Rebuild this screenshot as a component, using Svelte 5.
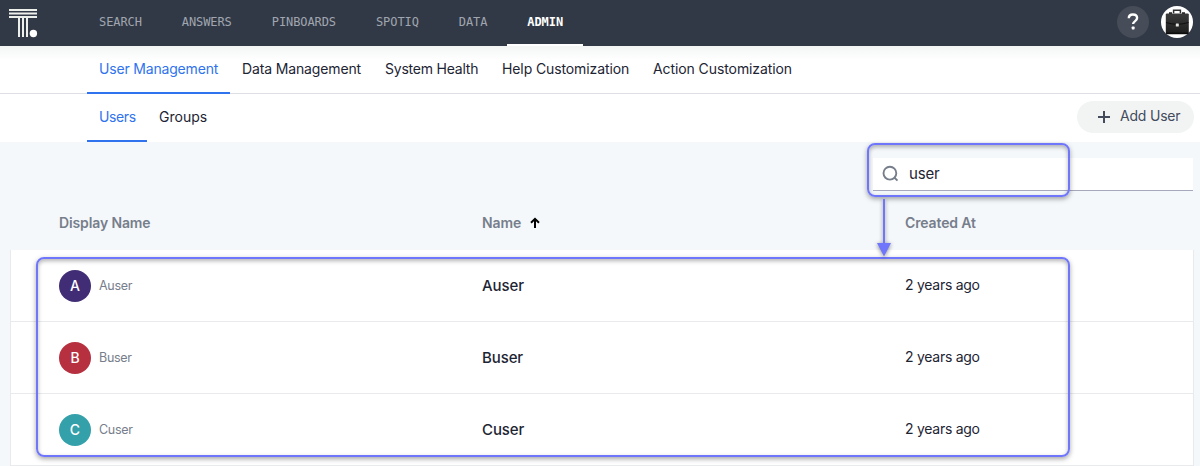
<script>
  const nav = ['SEARCH', 'ANSWERS', 'PINBOARDS', 'SPOTIQ', 'DATA', 'ADMIN'];
  const sections = [
    { label: 'User Management', width: 143, spacing: -0.18 },
    { label: 'Data Management', width: 143, spacing: -0.14 },
    { label: 'System Health', width: 117, spacing: -0.22 },
    { label: 'Help Customization', width: 151, spacing: -0.11 },
    { label: 'Action Customization', width: 163, spacing: -0.09 }
  ];
  const users = [
    { name: 'Auser', color: '#412d75' },
    { name: 'Buser', color: '#b6303f' },
    { name: 'Cuser', color: '#34a0aa' }
  ];
</script>

<div class="page">
  <header>
    <svg class="logo" width="30" height="30" viewBox="0 0 30 30">
      <path d="M1 2H29M1 5.5H29M1 9H29" stroke="#edf0ea" stroke-width="2" />
      <path d="M11 9V29M15 9V29M19 9V29" stroke="#edf0ea" stroke-width="2" />
      <circle cx="25.4" cy="25.5" r="3.7" fill="#fff" />
    </svg>
    <nav>
      {#each nav as item}
        <span class:active={item === 'ADMIN'}>{item}</span>
      {/each}
    </nav>
    <div class="actions">
      <span class="help">
        <svg width="12" height="18" viewBox="0 0 12 18">
          <path d="M1.8 5.3C1.8 2.8 3.5 1.5 5.9 1.5s4.2 1.3 4.2 3.6c0 3-4 3-4 6" fill="none" stroke="#fff" stroke-width="2.4" />
          <rect x="4.7" y="13.6" width="2.9" height="2.9" rx=".7" fill="#fff" />
        </svg>
      </span>
      <svg class="avatar" width="32" height="32" viewBox="0 0 32 32">
        <defs>
          <linearGradient id="leather" x1="0" y1="0" x2="0" y2="1">
            <stop offset="0" stop-color="#3b3b3b" />
            <stop offset="1" stop-color="#1c1c1c" />
          </linearGradient>
        </defs>
        <circle cx="16" cy="16" r="16" fill="#fff" />
        <path d="M12.6 7.2V4.2h6.8v3" fill="none" stroke="#303030" stroke-width="1.5" />
        <path d="M8 6.2h3v2H8zM21 6.2h3v2h-3z" fill="#222" />
        <rect x="4.8" y="7.4" width="23" height="20.8" rx="1.2" fill="url(#leather)" />
        <path d="M5 16.5Q16 20 27.5 16.5" fill="none" stroke="#0b0b0b" stroke-width=".9" />
        <path d="M5.3 27.2h22" stroke="#050505" stroke-width="1" />
        <rect x="14.8" y="17.4" width="3" height="3" rx=".5" fill="#e7e5df" />
      </svg>
    </div>
  </header>

  <div class="sections">
    {#each sections as section, i}
      <span class="tab" class:selected={i === 0} style:width="{section.width}px" style:letter-spacing="{section.spacing}px">{section.label}</span>
    {/each}
  </div>

  <div class="subtabs">
    <span class="tab selected users">Users</span>
    <span class="tab groups">Groups</span>
    <button>
      <svg width="14" height="14" viewBox="0 0 14 14"><path d="M7 1v12M1 7h12" stroke="#434b5d" stroke-width="2" /></svg>
      <span>Add User</span>
    </button>
  </div>

  <main>
    <div class="searchrow">
      <div class="search">
        <svg width="18" height="18" viewBox="0 0 18 18" fill="none" stroke="#777e8b" stroke-width="1.9">
          <circle cx="7.9" cy="8.2" r="6.4" />
          <path d="M12.3 12.5l3.2 3.2" />
        </svg>
        <span>user</span>
      </div>
    </div>
    <div class="head row">
      <span>Display Name</span>
      <span class="sorted">Name
        <svg width="10" height="12" viewBox="0 0 10 12" fill="none" stroke="#000" stroke-width="2"><path d="M5 11V2M1 5.8L5 1.9l4 3.9" /></svg>
      </span>
      <span class="createdhead">Created At</span>
    </div>
    <div class="list">
      {#each users as user}
        <div class="row user">
          <div class="display">
            <span class="initial" style:background={user.color}>{user.name[0]}</span>
            <span>{user.name}</span>
          </div>
          <span class="name">{user.name}</span>
          <span class="created">2 years ago</span>
        </div>
      {/each}
    </div>
  </main>

  <div class="callout around-search"></div>
  <div class="callout around-users"></div>
  <svg class="arrow" width="24" height="64" viewBox="0 0 24 64">
    <path d="M12 2V47" stroke="#7076fb" stroke-width="2" />
    <path d="M5 46H19L12 59.5Z" fill="#7076fb" />
  </svg>
</div>

<style>
  :global(body) { overflow: hidden; }
  .page {
    position: relative;
    height: 466px;
    overflow: hidden;
    display: flex;
    flex-direction: column;
    background: #f4f8fb;
    color: #1d2433;
    font-family: Inter, sans-serif;
    font-size: 14px;
  }
  .page :global(svg) { display: block; flex: none; }
  header {
    flex: none;
    height: 46px;
    box-sizing: border-box;
    display: flex;
    align-items: flex-start;
    background: #323946;
  }
  .logo { margin: 8px 0 0 8px; }
  nav { display: flex; margin-left: 41px; }
  nav span {
    height: 44px;
    padding: 0 20px;
    border-bottom: 2px solid transparent;
    font: 12px/44px "DejaVu Sans Mono", monospace;
    letter-spacing: -.09px;
    color: #a0a6b0;
  }
  nav span.active { color: #fff; border-color: #fff; font-weight: bold; }
  .actions { display: flex; gap: 12px; margin: 6px 7px 0 auto; }
  .help {
    width: 32px;
    height: 32px;
    border-radius: 50%;
    display: flex;
    align-items: center;
    justify-content: center;
    background: #464c58;
  }
  .sections {
    flex: none;
    height: 48px;
    box-sizing: border-box;
    display: flex;
    padding-left: 87px;
    border-bottom: 1px solid #dddfe4;
    background: linear-gradient(#f3f5f5, #fff 14px);
  }
  .tab {
    box-sizing: border-box;
    height: 48px;
    padding: 0 12px;
    line-height: 46px;
    white-space: nowrap;
    border-bottom: 2px solid transparent;
  }
  .tab.selected { color: #2f73ee; border-color: #2f73ee; }
  .subtabs {
    flex: none;
    height: 48px;
    display: flex;
    padding: 0 6px 0 87px;
    background: #fff;
  }
  .users { width: 60px; letter-spacing: -.4px; }
  .groups { width: 72px; }
  button {
    width: 117px;
    height: 32px;
    margin: 7px 0 0 auto;
    padding: 0 0 0 20px;
    border: 0;
    border-radius: 16px;
    display: flex;
    align-items: center;
    gap: 9px;
    background: #f2f4f4;
    color: #434b5d;
    font: 14px/30px Inter, sans-serif;
    letter-spacing: -.2px;
  }
  button span { padding-bottom: 2px; }
  .searchrow { display: flex; justify-content: flex-end; padding: 16px 7px 0 0; }
  .search {
    box-sizing: border-box;
    width: 320px;
    height: 33px;
    display: flex;
    align-items: center;
    gap: 9px;
    padding-left: 9px;
    background: #fff;
    border-bottom: 1px solid #a6a9bb;
    font-size: 15px;
    letter-spacing: -.15px;
  }
  .search span { padding-bottom: 1px; }
  .row { display: grid; grid-template-columns: 423px 423px 1fr; align-items: center; }
  .head {
    height: 59px;
    padding: 0 0 0 59px;
    line-height: 64px;
    font-weight: 600;
    letter-spacing: -.13px;
    color: #777e8b;
  }
  .sorted { display: flex; align-items: center; gap: 9px; }
  .list {
    box-sizing: border-box;
    margin: 0 6px 0 10px;
    border: 1px solid #e8eaed;
    border-top: 0;
    background: #fff;
  }
  .user { height: 71px; padding-left: 48px; border-bottom: 1px solid #e8eaed; }
  .user:last-child { border-bottom: 0; }
  .display { display: flex; align-items: center; gap: 8px; font-size: 12.5px; letter-spacing: -.3px; color: #777e8b; }
  .initial {
    width: 32px;
    height: 32px;
    border-radius: 50%;
    text-align: center;
    line-height: 31px;
    font-size: 14px;
    font-weight: 500;
    letter-spacing: 0;
    color: #fff;
  }
  .name { font-size: 15px; font-weight: 500; letter-spacing: -.1px; }
  .created { padding-bottom: 2px; letter-spacing: -.27px; }
  .callout {
    position: absolute;
    box-sizing: border-box;
    border: 2px solid #7076fb;
    border-radius: 8px;
    box-shadow: 0 2px 5px rgba(0, 0, 0, .35), inset 0 2px 4px rgba(0, 0, 0, .3);
  }
  .around-search { left: 867px; top: 143px; width: 203px; height: 54px; }
  .around-users { left: 36px; top: 257px; width: 1034px; height: 200px; }
  .arrow { position: absolute; left: 872px; top: 197px; filter: drop-shadow(0 1px 2px rgba(0, 0, 0, .45)); }
</style>
